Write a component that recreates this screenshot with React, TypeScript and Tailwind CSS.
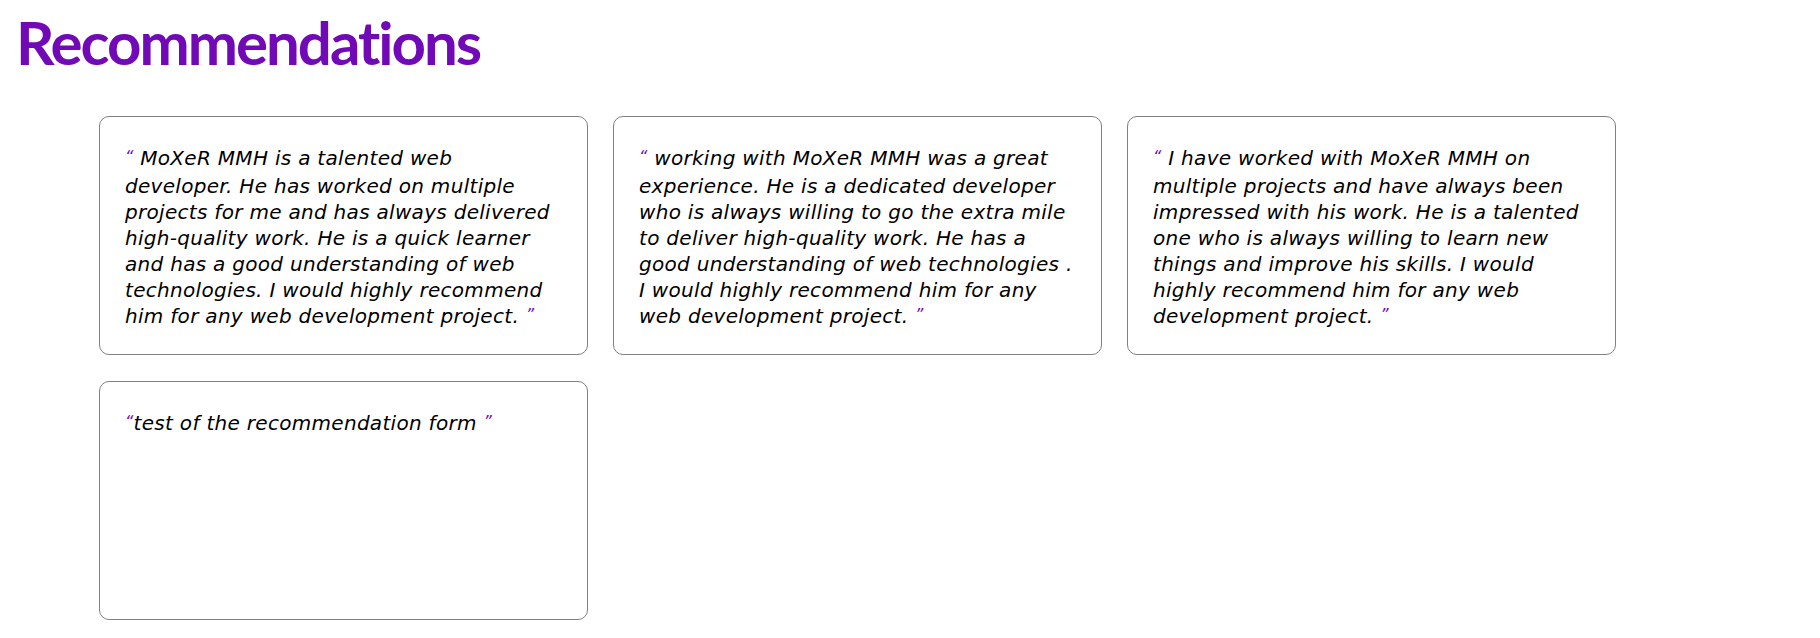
const recommendations = [
  'MoXeR MMH is a talented web developer. He has worked on multiple projects for me and has always delivered high-quality work. He is a quick learner and has a good understanding of web technologies. I would highly recommend him for any web development project.',
  'working with MoXeR MMH was a great experience. He is a dedicated developer who is always willing to go the extra mile to deliver high-quality work. He has a good understanding of web technologies . I would highly recommend him for any web development project.',
  'I have worked with MoXeR MMH on multiple projects and have always been impressed with his work. He is a talented one who is always willing to learn new things and improve his skills. I would highly recommend him for any web development project.',
  'test of the recommendation form',
]

function Card({ text, tight }: { text: string; tight?: boolean }) {
  return (
    <div className="w-[489px] h-[239px] border border-[#808080] rounded-[10px] pl-[25px] pr-[28px] pt-[28px]">
      <p className="italic text-[20px] tracking-[0.3px] leading-[26px] text-black font-['DejaVu_Sans',sans-serif]">
        <span className="text-[#7209b7] text-[16px] relative -top-[3px]">&ldquo;</span>
        {tight ? '' : ' '}
        {text}{' '}
        <span className="text-[#7209b7] text-[16px] relative -top-[3px]">&rdquo;</span>
      </p>
    </div>
  )
}

export default function App() {
  return (
    <div className="bg-white min-h-screen font-['Lato','Open_Sans',sans-serif]">
      <h1 className="text-[60px] font-bold leading-none tracking-[-2px] text-[#7209b7] pl-[16px] pt-[12px]">Recommendations</h1>
      <div className="flex flex-wrap gap-x-[25px] gap-y-[26px] pl-[99px] pt-[44px] w-[1650px]">
        {recommendations.map((r, i) => (
          <Card key={i} text={r} tight={i === 3} />
        ))}
      </div>
    </div>
  )
}
